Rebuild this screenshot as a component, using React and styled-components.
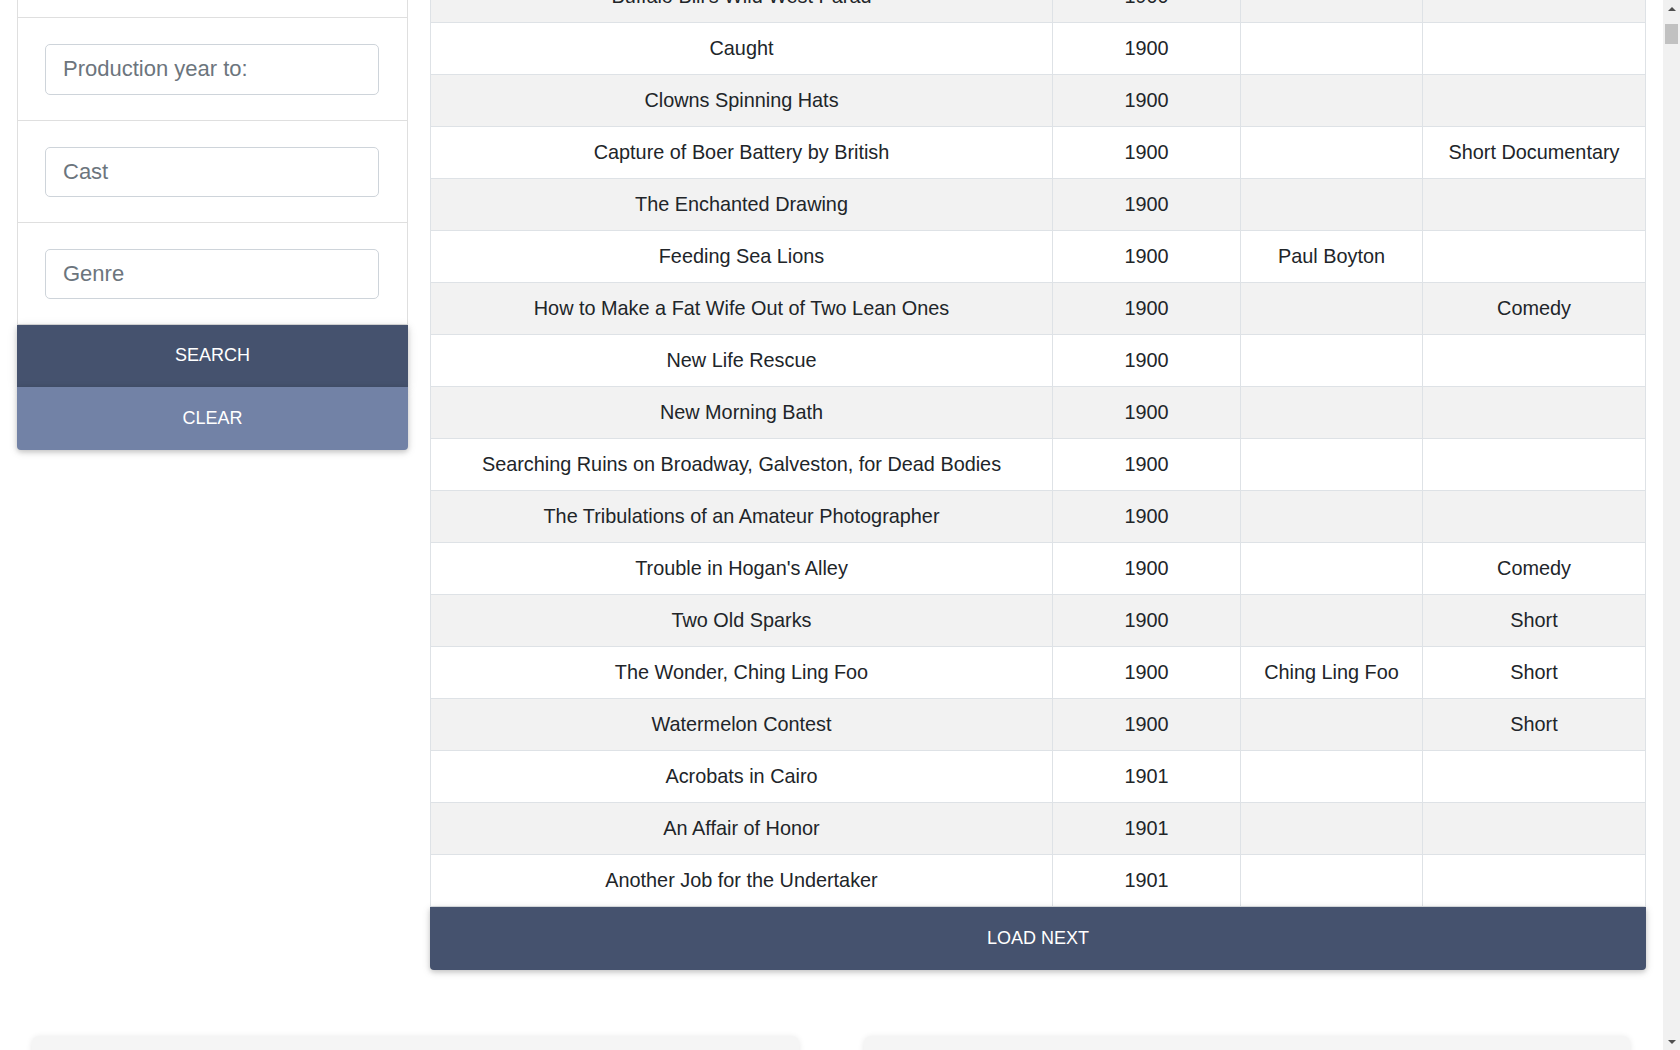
import { useLayoutEffect, useRef } from 'react';
import styled, { createGlobalStyle } from 'styled-components';

const GlobalStyle = createGlobalStyle`
  html, body {
    margin: 0;
    padding: 0;
    height: 100%;
    overflow: hidden;
  }
  body {
    font-family: 'Liberation Sans', Arial, sans-serif;
    color: #212529;
    background: #fff;
  }
  * {
    box-sizing: border-box;
  }
`;

const Screen = styled.div`
  display: flex;
  height: 100vh;
`;

const Viewport = styled.div`
  flex: 1;
  min-width: 0;
  height: 100%;
  overflow: hidden;
`;

const ScrollTrack = styled.div`
  width: 17px;
  flex-shrink: 0;
  background: #f1f1f1;
  display: flex;
  flex-direction: column;
  align-items: center;
`;

const ScrollArrow = styled.div`
  width: 17px;
  height: 17px;
  display: flex;
  align-items: center;
  justify-content: center;
  margin-top: ${(p) => (p.$down ? 'auto' : '0')};
  &::before {
    content: '';
    border-left: 4px solid transparent;
    border-right: 4px solid transparent;
    ${(p) => (p.$down ? 'border-top' : 'border-bottom')}: 4px solid #505050;
  }
`;

const ScrollThumb = styled.div`
  width: 13px;
  height: 20px;
  margin-top: 7px;
  background: #c1c1c1;
`;

const Page = styled.div`
  padding-top: 24px;
  padding-bottom: 60px;
`;

const Layout = styled.div`
  display: flex;
  align-items: flex-start;
  gap: 22px;
  padding: 0 17px;
`;

const Sidebar = styled.aside`
  width: 391px;
  flex-shrink: 0;
`;

const FilterCard = styled.div`
  border: 1px solid #dfdfdf;
  border-bottom: none;
  background: #fff;
`;

const FilterSection = styled.div`
  padding: 26px 28px 25px 27px;
  border-bottom: 1px solid #dfdfdf;
`;

const FilterInput = styled.input`
  display: block;
  width: 100%;
  height: 50.2px;
  padding: 0 17px;
  border: 1px solid #ced4da;
  border-radius: 5px;
  font-family: 'Liberation Sans', Arial, sans-serif;
  font-size: 22px;
  color: #495057;
  background: #fff;
  outline: none;
  &::placeholder {
    color: #6c757d;
  }
`;

const ActionButton = styled.button`
  display: block;
  width: 100%;
  height: ${(p) => p.$height}px;
  border: none;
  border-radius: ${(p) => p.$radius};
  background: ${(p) => p.$bg};
  color: #fff;
  font-family: 'Liberation Sans', Arial, sans-serif;
  font-size: 18px;
  text-transform: uppercase;
  cursor: pointer;
  box-shadow: 0 2px 5px 0 rgba(0, 0, 0, 0.16), 0 2px 10px 0 rgba(0, 0, 0, 0.12);
  position: relative;
`;

const Results = styled.section`
  flex: 1;
  min-width: 0;
`;

const MovieTable = styled.table`
  width: 100%;
  border-collapse: collapse;
  table-layout: fixed;
  font-size: 19.85px;
  color: #212529;

  th,
  td {
    border: 1px solid #dee2e6;
    text-align: center;
    vertical-align: middle;
    padding: 0 12px;
    white-space: nowrap;
    overflow: hidden;
  }

  th {
    height: 53px;
    font-weight: 700;
  }

  td {
    height: 52px;
  }

  tbody tr:nth-of-type(odd) {
    background: #f2f2f2;
  }
`;

const StatsRow = styled.div`
  display: grid;
  grid-template-columns: 1fr 1fr;
  gap: 65px;
  margin-top: 66px;
  padding: 0 33px 0 32px;
`;

const StatsCard = styled.div`
  height: 260px;
  background: #f5f5f5;
  border-radius: 7px;
  box-shadow: 0 1px 6px rgba(0, 0, 0, 0.1);
`;

const filters = [
  'Title',
  'Production year from:',
  'Production year to:',
  'Cast',
  'Genre',
];

const movies = [
  ['After Dark in Central Park', 1900, '', ''],
  ["Boarding School Girls' Pajama Parade", 1900, '', ''],
  ["Buffalo Bill's Wild West Parad", 1900, '', ''],
  ['Caught', 1900, '', ''],
  ['Clowns Spinning Hats', 1900, '', ''],
  ['Capture of Boer Battery by British', 1900, '', 'Short Documentary'],
  ['The Enchanted Drawing', 1900, '', ''],
  ['Feeding Sea Lions', 1900, 'Paul Boyton', ''],
  ['How to Make a Fat Wife Out of Two Lean Ones', 1900, '', 'Comedy'],
  ['New Life Rescue', 1900, '', ''],
  ['New Morning Bath', 1900, '', ''],
  ['Searching Ruins on Broadway, Galveston, for Dead Bodies', 1900, '', ''],
  ['The Tribulations of an Amateur Photographer', 1900, '', ''],
  ["Trouble in Hogan's Alley", 1900, '', 'Comedy'],
  ['Two Old Sparks', 1900, '', 'Short'],
  ['The Wonder, Ching Ling Foo', 1900, 'Ching Ling Foo', 'Short'],
  ['Watermelon Contest', 1900, '', 'Short'],
  ['Acrobats in Cairo', 1901, '', ''],
  ['An Affair of Honor', 1901, '', ''],
  ['Another Job for the Undertaker', 1901, '', ''],
];

const App = () => {
  const viewRef = useRef(null);
  const anchorRef = useRef(null);

  // page is shown scrolled down, with the "year to" filter just below the top
  useLayoutEffect(() => {
    const view = viewRef.current;
    const anchor = anchorRef.current;
    if (!view || !anchor) return;
    const offset =
      anchor.getBoundingClientRect().top - view.getBoundingClientRect().top;
    view.scrollTop = view.scrollTop + offset - 18;
  }, []);

  return (
    <Screen>
      <GlobalStyle />
      <Viewport ref={viewRef}>
        <Page>
          <Layout>
            <Sidebar>
              <FilterCard>
                {filters.map((label, i) => (
                  <FilterSection key={label} ref={i === 2 ? anchorRef : null}>
                    <FilterInput type='text' placeholder={label} />
                  </FilterSection>
                ))}
              </FilterCard>
              <ActionButton $height={62} $bg='#45526e' $radius='0'>
                Search
              </ActionButton>
              <ActionButton $height={63} $bg='#7282a6' $radius='0 0 4px 4px'>
                Clear
              </ActionButton>
            </Sidebar>
            <Results>
              <MovieTable>
                <colgroup>
                  <col style={{ width: 622 }} />
                  <col style={{ width: 188 }} />
                  <col style={{ width: 182 }} />
                  <col />
                </colgroup>
                <thead>
                  <tr>
                    <th>Title</th>
                    <th>Year</th>
                    <th>Cast</th>
                    <th>Genre</th>
                  </tr>
                </thead>
                <tbody>
                  {movies.map(([title, year, cast, genre]) => (
                    <tr key={title}>
                      <td>{title}</td>
                      <td>{year}</td>
                      <td>{cast}</td>
                      <td>{genre}</td>
                    </tr>
                  ))}
                </tbody>
              </MovieTable>
              <ActionButton $height={63} $bg='#45526e' $radius='0 0 4px 4px'>
                Load next
              </ActionButton>
            </Results>
          </Layout>
          <StatsRow>
            <StatsCard />
            <StatsCard />
          </StatsRow>
        </Page>
      </Viewport>
      <ScrollTrack>
        <ScrollArrow />
        <ScrollThumb />
        <ScrollArrow $down />
      </ScrollTrack>
    </Screen>
  );
};

export default App;
